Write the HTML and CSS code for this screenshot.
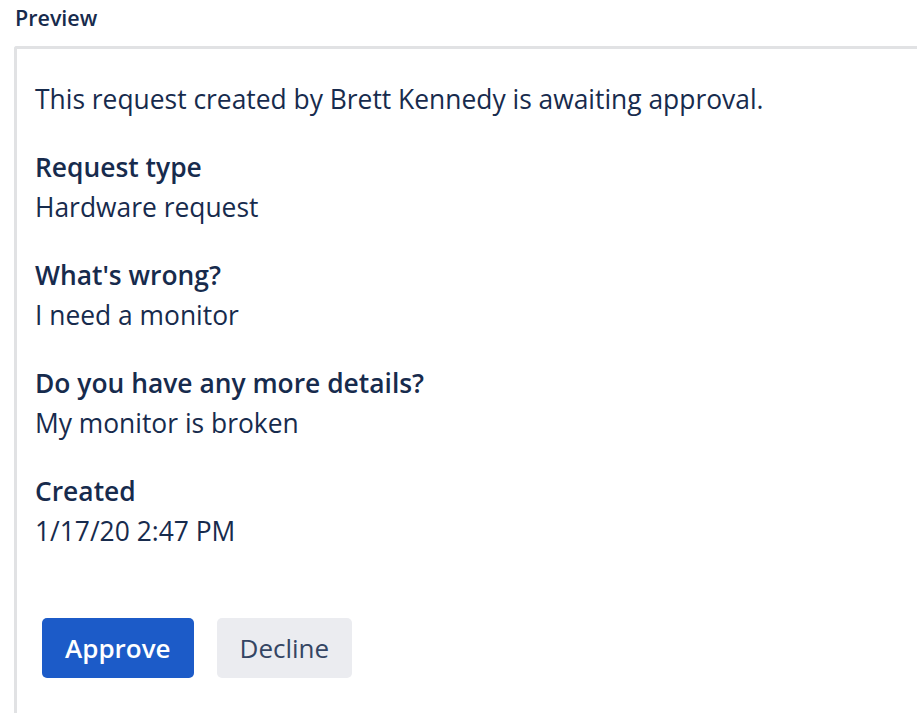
FILE: index.html
```html
<!DOCTYPE html>
<html>
<head>
<meta charset="utf-8">
<link rel="stylesheet" href="styles.css">
</head>
<body>
<div class="page">
  <div class="heading">Preview</div>
  <div class="box">
    <p class="intro">This request created by Brett Kennedy is awaiting approval.</p>
    <div class="field">
      <div class="label">Request type</div>
      <div class="value">Hardware request</div>
    </div>
    <div class="field">
      <div class="label">What's wrong?</div>
      <div class="value">I need a monitor</div>
    </div>
    <div class="field">
      <div class="label">Do you have any more details?</div>
      <div class="value">My monitor is broken</div>
    </div>
    <div class="field">
      <div class="label">Created</div>
      <div class="value">1/17/20 2:47 PM</div>
    </div>
    <div class="actions">
      <button class="btn btn-primary">Approve</button>
      <button class="btn btn-default">Decline</button>
    </div>
  </div>
</div>
</body>
</html>
```
FILE: styles.css
```css
html, body {
  margin: 0;
  padding: 0;
  background: #ffffff;
  height: 100%;
}
body {
  font-family: "Open Sans", "Noto Sans", sans-serif;
  color: #172b4d;
  overflow: hidden;
}
.page {
  padding: 3px 0 0 14px;
  box-sizing: border-box;
  height: 100%;
  display: flex;
  flex-direction: column;
}
.heading {
  font-size: 21.5px;
  font-weight: 600;
  line-height: 30px;
  margin-left: 1px;
}
.box {
  flex: 1;
  margin-top: 13px;
  border-top: 3px solid #e1e2e4;
  border-left: 3px solid #e1e2e4;
  border-radius: 3px 0 0 0;
  padding: 30px 0 0 18px;
}
.intro {
  margin: 0 0 28px 0;
  font-size: 26.4px;
  line-height: 40px;
}
.field {
  margin-bottom: 28px;
  font-size: 26.4px;
  line-height: 40px;
}
.label {
  font-weight: 600;
}
.actions {
  display: flex;
  gap: 23px;
  margin-top: 67px;
  margin-left: 7px;
}
.btn {
  font-family: "Open Sans", "Noto Sans", sans-serif;
  font-size: 26px;
  height: 60px;
  border: none;
  border-radius: 5px;
  padding: 0 23px;
  cursor: pointer;
}
.btn-primary {
  background: #1c5bc8;
  color: #ffffff;
  font-weight: 600;
}
.btn-default {
  background: #ebecf0;
  color: #344563;
}
```
